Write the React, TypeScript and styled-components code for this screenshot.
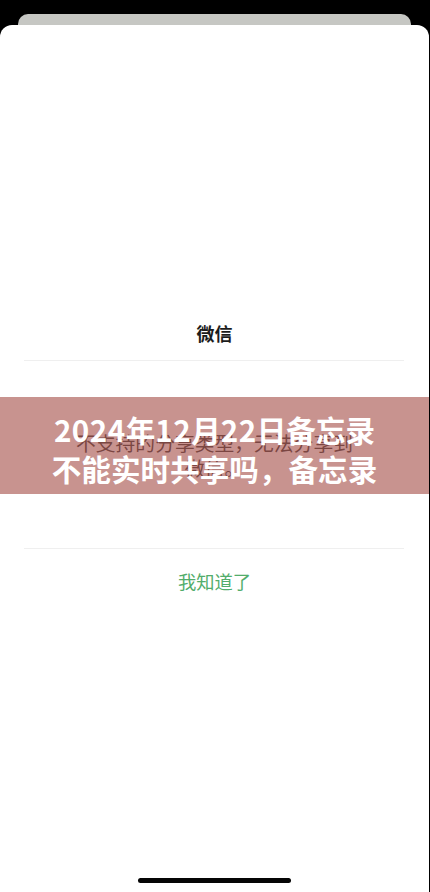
import React from 'react';
import styled, { createGlobalStyle } from 'styled-components';

const GlobalStyle = createGlobalStyle`
  html, body {
    margin: 0;
    padding: 0;
    background: #000;
  }
  body {
    font-family: 'Noto Sans CJK SC', 'Noto Sans', sans-serif;
  }
`;

const Screen = styled.div`
  width: 430px;
  height: 892px;
  padding-top: 14px;
  box-sizing: border-box;
  display: flex;
  flex-direction: column;
  overflow: hidden;
  background: #000;
`;

const BackCard = styled.div`
  height: 14px;
  margin: 0 19px -3px 18px;
  background: #c6c7c3;
  border-radius: 10px 10px 0 0;
`;

const Sheet = styled.div`
  position: relative;
  flex: 1;
  background: #fff;
  border-radius: 12px 12px 0 0;
  margin-right: 1px;
  display: flex;
  flex-direction: column;
  align-items: center;
  padding-top: 295px;
`;

const Title = styled.div`
  font-size: 18px;
  line-height: 26px;
  font-weight: 600;
  color: #1b1b1b;
`;

const Divider = styled.div<{ $gap: number }>`
  align-self: stretch;
  height: 1px;
  margin: ${(p) => p.$gap}px 25px 0 24px;
  background: #efefef;
`;

const Message = styled.div`
  max-width: 284px;
  margin-top: 69px;
  margin-bottom: 68px;
  font-size: 19.8px;
  line-height: 25px;
  color: #353535;
  text-align: center;
`;

const ConfirmButton = styled.button`
  margin-top: 19px;
  padding: 0;
  border: none;
  background: none;
  font-family: inherit;
  font-size: 18.3px;
  line-height: 26px;
  color: #52ad6b;
  cursor: pointer;
`;

const HomeIndicator = styled.div`
  margin-top: auto;
  margin-bottom: 9px;
  width: 153px;
  height: 5px;
  border-radius: 3px;
  background: #050505;
`;

const Banner = styled.div`
  position: absolute;
  top: 372px;
  left: 0;
  right: 0;
  height: 97px;
  box-sizing: border-box;
  padding-top: 13px;
  display: flex;
  justify-content: center;
  background: rgba(166, 80, 74, 0.62);
`;

const BannerTitle = styled.h1`
  margin: 0;
  max-width: 336px;
  font-size: 29.6px;
  line-height: 39px;
  font-weight: 700;
  color: #fff;
  text-align: center;
`;

const Digits = styled.span`
  letter-spacing: 0.5px;
`;

export default function App() {
  return (
    <>
      <GlobalStyle />
      <Screen>
        <BackCard />
        <Sheet>
          <Title>微信</Title>
          <Divider $gap={14} />
          <Message>不支持的分享类型，无法分享到微信。</Message>
          <Divider $gap={0} />
          <ConfirmButton>我知道了</ConfirmButton>
          <HomeIndicator />
          <Banner>
            <BannerTitle>
              <Digits>2024</Digits>年<Digits>12</Digits>月<Digits>22</Digits>日备忘录不能实时共享吗，备忘录
            </BannerTitle>
          </Banner>
        </Sheet>
      </Screen>
    </>
  );
}
